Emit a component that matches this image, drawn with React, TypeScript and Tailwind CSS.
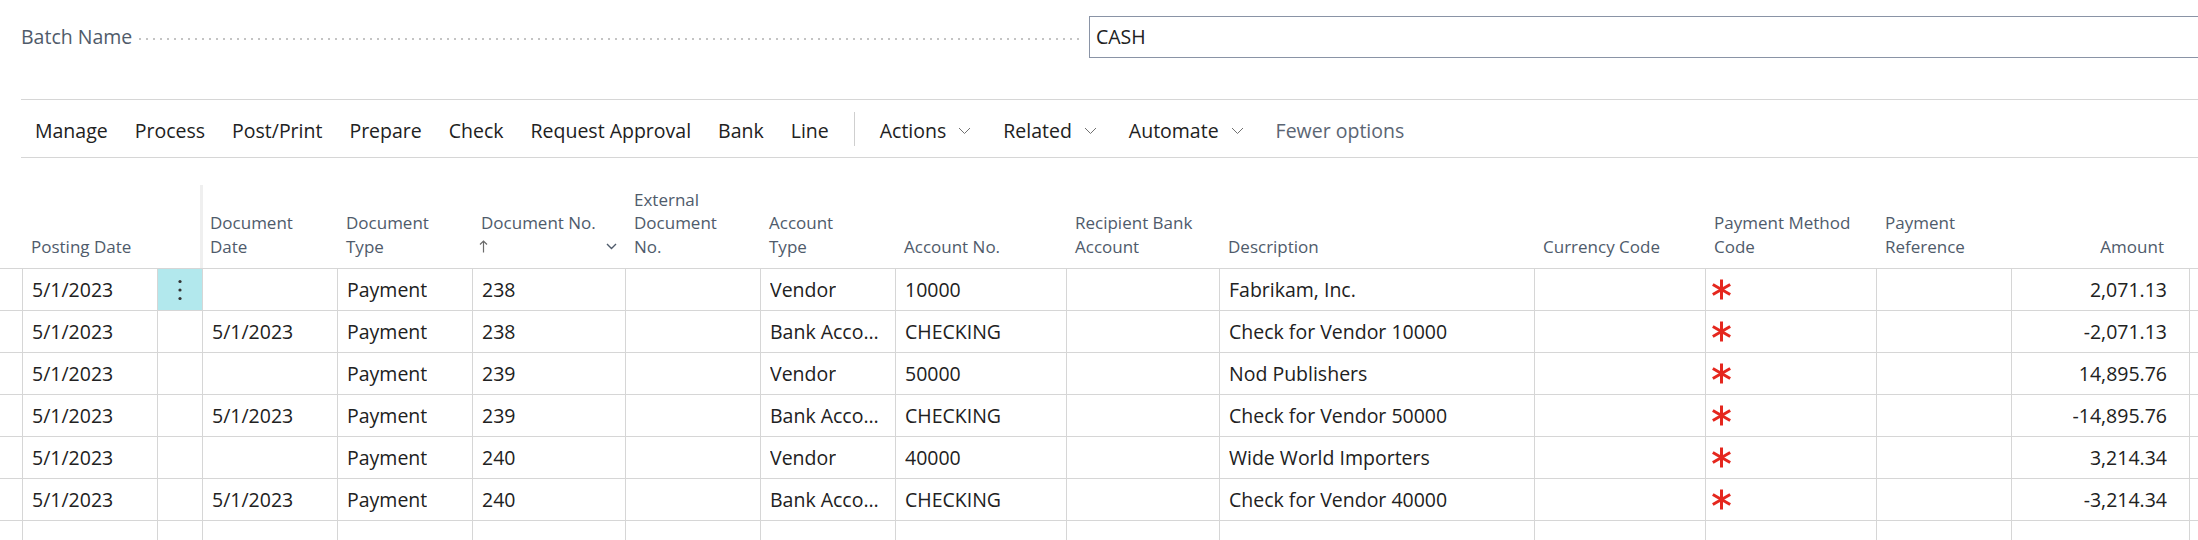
import React from 'react';

type Col = {
  key: string;
  label: string[];
  w: string;
  right?: boolean;
};

const cols: Col[] = [
  { key: 'posting', label: ['Posting Date'], w: 'w-[135px]' },
  { key: 'menu', label: [], w: 'w-[45px]' },
  { key: 'docDate', label: ['Document', 'Date'], w: 'w-[135px]' },
  { key: 'docType', label: ['Document', 'Type'], w: 'w-[135px]' },
  { key: 'docNo', label: ['Document No.'], w: 'w-[153px]' },
  { key: 'extDoc', label: ['External', 'Document', 'No.'], w: 'w-[135px]' },
  { key: 'accType', label: ['Account', 'Type'], w: 'w-[135px]' },
  { key: 'accNo', label: ['Account No.'], w: 'w-[171px]' },
  { key: 'recBank', label: ['Recipient Bank', 'Account'], w: 'w-[153px]' },
  { key: 'desc', label: ['Description'], w: 'w-[315px]' },
  { key: 'currency', label: ['Currency Code'], w: 'w-[171px]' },
  { key: 'payMethod', label: ['Payment Method', 'Code'], w: 'w-[171px]' },
  { key: 'payRef', label: ['Payment', 'Reference'], w: 'w-[135px]' },
  { key: 'amount', label: ['Amount'], w: 'w-[179px]', right: true },
];

const rows: Record<string, string>[] = [
  { posting: '5/1/2023', docDate: '', docType: 'Payment', docNo: '238', accType: 'Vendor', accNo: '10000', desc: 'Fabrikam, Inc.', amount: '2,071.13' },
  { posting: '5/1/2023', docDate: '5/1/2023', docType: 'Payment', docNo: '238', accType: 'Bank Account', accNo: 'CHECKING', desc: 'Check for Vendor 10000', amount: '-2,071.13' },
  { posting: '5/1/2023', docDate: '', docType: 'Payment', docNo: '239', accType: 'Vendor', accNo: '50000', desc: 'Nod Publishers', amount: '14,895.76' },
  { posting: '5/1/2023', docDate: '5/1/2023', docType: 'Payment', docNo: '239', accType: 'Bank Account', accNo: 'CHECKING', desc: 'Check for Vendor 50000', amount: '-14,895.76' },
  { posting: '5/1/2023', docDate: '', docType: 'Payment', docNo: '240', accType: 'Vendor', accNo: '40000', desc: 'Wide World Importers', amount: '3,214.34' },
  { posting: '5/1/2023', docDate: '5/1/2023', docType: 'Payment', docNo: '240', accType: 'Bank Account', accNo: 'CHECKING', desc: 'Check for Vendor 40000', amount: '-3,214.34' },
];

const Chevron = () => (
  <svg width="13" height="8" viewBox="0 0 13 8" className="ml-[12px]">
    <polyline points="1,1 6.5,6.5 12,1" fill="none" stroke="#707070" strokeWidth="1" />
  </svg>
);

const Asterisk = () => (
  <svg width="21" height="21" viewBox="0 0 21 21" className="ml-[-4px]">
    <g stroke="#e5271e" strokeWidth="3">
      <line x1="10.5" y1="0.5" x2="10.5" y2="20.5" />
      <line x1="1.8" y1="5.5" x2="19.2" y2="15.5" />
      <line x1="1.8" y1="15.5" x2="19.2" y2="5.5" />
    </g>
  </svg>
);

const App: React.FC = () => {
  const actions = ['Manage', 'Process', 'Post/Print', 'Prepare', 'Check', 'Request Approval', 'Bank', 'Line'];
  const dropdowns = ['Actions', 'Related', 'Automate'];

  return (
    <div className="w-[2198px] h-[540px] overflow-hidden bg-white font-['Open_Sans',sans-serif] text-[#212121]">
      {/* Batch name field */}
      <div className="flex items-center h-[42px] mt-[16px] pl-[21px]">
        <div className="w-[1068px] shrink-0 flex items-center">
          <span className="text-[19.5px] text-[#505b6a]">Batch Name</span>
          <div className="flex-1 ml-[7px] mr-[8px] mt-[4px] h-[2px] bg-[repeating-linear-gradient(to_right,#c4c4c4_0px,#c4c4c4_2px,transparent_2px,transparent_7px)]" />
        </div>
        <div className="w-[1130px] shrink-0 h-[42px] border border-[#8a94a6] flex items-center pl-[6px] text-[19.5px]">
          CASH
        </div>
      </div>

      {/* Action bar */}
      <div className="mt-[41px] ml-[21px] h-[59px] border-y border-[#d6d6d6] flex items-center pl-[14px] pt-[4px] gap-[27px] text-[19.5px]">
        {actions.map((a) => (
          <span key={a}>{a}</span>
        ))}
        <div className="w-px h-[34px] bg-[#cfcfcf] mt-[-4px] mx-[-2px]" />
        {dropdowns.map((d) => (
          <span key={d} className="flex items-center mr-[5px]">
            {d}
            <Chevron />
          </span>
        ))}
        <span className="text-[#5b6573]">Fewer options</span>
      </div>

      {/* Column headers */}
      <div className="mt-[27px] flex items-end h-[84px] border-b border-[#d6d6d6] text-[17px] leading-[23.5px] text-[#4f5b6b]">
        <div className="w-[22px] shrink-0" />
        {cols.map((c) => {
          if (c.key === 'menu') return <div key={c.key} className="w-[43px] shrink-0" />;
          const band = c.key === 'docDate';
          return (
            <div
              key={c.key}
              className={`${band ? 'w-[137px] border-l-[3px] border-[#efefef] pl-[7px]' : `${c.w} pl-[9px]`} shrink-0 h-full flex flex-col justify-end pb-[10px] ${
                c.right ? 'items-end pr-[26px]' : ''
              }`}
            >
              {c.label.map((l) => (
                <div key={l} className="whitespace-nowrap">
                  {l}
                </div>
              ))}
              {c.key === 'docNo' && (
                <div className="flex items-center justify-between pr-[8px] h-[23.5px]">
                  <svg width="9" height="13" viewBox="0 0 9 13" className="ml-[-2px]">
                    <path d="M4.5 12.5V1M1 4.5L4.5 1L8 4.5" fill="none" stroke="#6b6b6b" strokeWidth="1.2" />
                  </svg>
                  <svg width="11" height="7" viewBox="0 0 11 7">
                    <polyline points="1,1 5.5,5.5 10,1" fill="none" stroke="#4f5b6b" strokeWidth="1.4" />
                  </svg>
                </div>
              )}
            </div>
          );
        })}
      </div>

      {/* Rows */}
      {[...rows, {} as Record<string, string>].map((r, i) => (
        <div key={i} className="flex h-[42px] border-b border-[#d6d6d6] text-[19.5px]">
          <div className="w-[22px] shrink-0" />
          {cols.map((c) => (
            <div
              key={c.key}
              className={`${c.w} shrink-0 border-l border-[#d6d6d6] flex items-center min-w-0 ${
                c.right ? 'justify-end pr-[22px] border-r' : 'pl-[9px] pr-[6px]'
              } ${c.key === 'menu' && i === 0 ? 'bg-[#b2e8ed] justify-center !pl-0 !pr-0' : ''}`}
            >
              {c.key === 'menu' && i === 0 && (
                <svg width="4" height="22" viewBox="0 0 4 22">
                  <circle cx="2" cy="2.5" r="1.6" fill="#333" />
                  <circle cx="2" cy="11" r="1.6" fill="#333" />
                  <circle cx="2" cy="19.5" r="1.6" fill="#333" />
                </svg>
              )}
              {c.key === 'payMethod' && i < rows.length && <Asterisk />}
              {r[c.key] && <span className="truncate">{r[c.key]}</span>}
            </div>
          ))}
        </div>
      ))}
    </div>
  );
};

export default App;
